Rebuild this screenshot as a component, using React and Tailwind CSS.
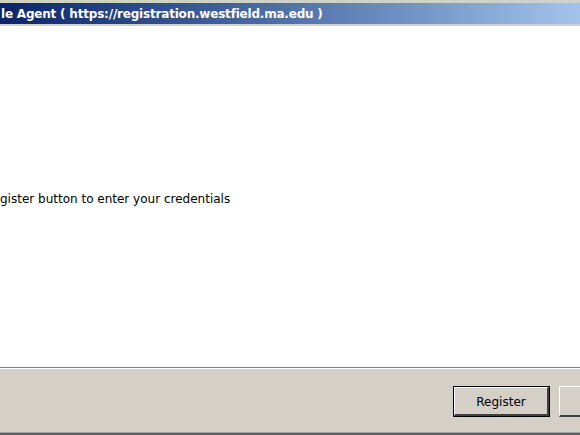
export default function App() {
  const ui = { fontFamily: '"DejaVu Sans", Tahoma, sans-serif' };

  return (
    <div className="flex h-[435px] w-[580px] flex-col overflow-hidden bg-[#d4d0c8]" style={ui}>
      <div className="h-[3px] shrink-0" />
      <div className="flex h-[21px] shrink-0 items-center bg-gradient-to-r from-[#0a246a] to-[#a2c4ec]">
        <span className="whitespace-nowrap pl-[1px] text-[12px] font-bold tracking-[-0.2px] text-white">
          le Agent ( https://registration.westfield.ma.edu )
        </span>
      </div>
      <div className="h-[2px] shrink-0 bg-[#d4d0c8]" />
      <div className="flex flex-1 flex-col bg-white">
        <p className="mt-[164px] whitespace-nowrap text-[12px] text-black">
          gister button to enter your credentials
        </p>
      </div>
      <div className="h-px shrink-0 bg-[#808080]" />
      <div className="h-px shrink-0 bg-white" />
      <div className="flex h-[63px] shrink-0 items-start pt-[17px]">
        <button className="ml-[453px] h-[31px] w-[97px] shrink-0 border border-black bg-[#d4d0c8] p-0">
          <span className="flex h-full w-full items-center justify-center border-b-2 border-r-2 border-l border-t border-b-[#404040] border-l-white border-r-[#404040] border-t-white pt-[1px] text-[12px] text-black">
            Register
          </span>
        </button>
        <div className="ml-[9px] h-[31px] w-[97px] shrink-0 border-b-2 border-r-2 border-l border-t border-b-[#404040] border-l-white border-r-[#404040] border-t-white bg-[#d4d0c8]" />
      </div>
      <div className="h-px shrink-0 bg-[#a0a0a0]" />
      <div className="h-[2px] shrink-0 bg-[#606060]" />
    </div>
  );
}
